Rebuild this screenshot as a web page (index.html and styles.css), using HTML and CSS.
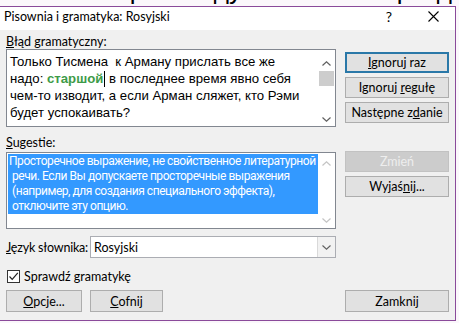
FILE: index.html
```html
<!DOCTYPE html>
<html lang="pl">
<head>
  <meta charset="UTF-8" />
  <meta name="viewport" content="width=device-width, initial-scale=1" />
  <title>Pisownia i gramatyka</title>
  <link rel="stylesheet" href="styles.css">
</head>
<body>
  <div class="doc-strip">
    <p class="doc-line">положен и расследуйтел. Что-то разд</p>
  </div>

  <div class="dialog">
    <div class="title-bar">
      <span class="title">Pisownia i gramatyka: Rosyjski</span>
      <span class="help">?</span>
      <svg class="close" width="11" height="11" viewBox="0 0 11 11">
        <path d="M0.5 0.5 L10.5 10.5 M10.5 0.5 L0.5 10.5" stroke="#000" stroke-width="1.1" fill="none" />
      </svg>
    </div>

    <div class="dialog-body">
      <div class="main-col">
        <div class="field-label"><u>B</u>łąd gramatyczny:</div>
        <div class="text-box error-box">
          <div class="box-text">Только Тисмена&nbsp; к Арману прислать все же<br>надо: <b class="flagged">старшой</b><span class="caret"></span> в последнее время явно себя<br>чем-то изводит, а если Арман сляжет, кто Рэми<br>будет успокаивать?</div>
          <div class="scrollbar error-scroll">
            <div class="arrow-cell">
              <svg width="9" height="5" viewBox="0 0 9 5"><polyline points="0.5,4.5 4.5,0.8 8.5,4.5" /></svg>
            </div>
            <div class="track"><div class="thumb"></div></div>
            <div class="arrow-cell">
              <svg width="9" height="5" viewBox="0 0 9 5"><polyline points="0.5,0.5 4.5,4.2 8.5,0.5" /></svg>
            </div>
          </div>
        </div>

        <div class="field-label suggest-label"><u>S</u>ugestie:</div>
        <div class="text-box suggest-box">
          <div class="suggest-area">
            <div class="selected">Просторечное выражение, не свойственное литературной<br>речи. Если Вы допускаете просторечные выражения<br>(например, для создания специального эффекта),<br>отключите эту опцию.</div>
          </div>
          <div class="scrollbar suggest-scroll">
            <div class="arrow-cell">
              <svg width="9" height="5" viewBox="0 0 9 5"><polyline points="0.5,4.5 4.5,0.8 8.5,4.5" /></svg>
            </div>
            <div class="arrow-cell">
              <svg width="9" height="5" viewBox="0 0 9 5"><polyline points="0.5,0.5 4.5,4.2 8.5,0.5" /></svg>
            </div>
          </div>
        </div>

        <div class="lang-row">
          <span class="lang-label"><u>J</u>ęzyk słownika:</span>
          <div class="combo">
            <span class="combo-value">Rosyjski</span>
            <span class="combo-drop">
              <svg width="9" height="5" viewBox="0 0 9 5"><polyline points="0.5,0.5 4.5,4.2 8.5,0.5" /></svg>
            </span>
          </div>
        </div>

        <label class="check-row">
          <span class="check-box">
            <svg width="11" height="11" viewBox="0 0 11 11"><polyline points="1.5,5.5 4.2,8.3 9.8,1.8" /></svg>
          </span>
          <span>Sprawdź <u>g</u>ramatykę</span>
        </label>

        <div class="bottom-row">
          <button class="btn btn-options"><u>O</u>pcje...</button>
          <button class="btn btn-undo"><u>C</u>ofnij</button>
        </div>
      </div>

      <div class="side-col">
        <button class="btn btn-default"><u>I</u>gnoruj raz</button>
        <button class="btn">Ignoruj <u>r</u>egułę</button>
        <button class="btn">Następne z<u>d</u>anie</button>
        <button class="btn btn-disabled btn-change">Zmień</button>
        <button class="btn">Wyjaś<u>n</u>ij...</button>
        <button class="btn btn-close">Zamknij</button>
      </div>
    </div>
  </div>
</body>
</html>
```

FILE: styles.css
```css
:root {
  --accent: #8a4a9a;
  --dialog-bg: #f0f0f0;
  --box-border: #828790;
  --btn-bg: #e1e1e1;
  --btn-border: #adadad;
  --select: #3399ff;
}

body {
  margin: 0;
  background: #fbf7fb;
  color: #000;
  font-family: Lato, Roboto, 'Noto Sans', sans-serif;
  font-size: 12.5px;
}

/* document text peeking above the dialog */
.doc-strip {
  height: 6px;
  overflow: hidden;
}

.doc-line {
  margin: -25px 0 0 -3px;
  font: 26px/30px 'Liberation Sans', sans-serif;
  white-space: nowrap;
}

.dialog {
  width: 456px;
  box-sizing: border-box;
  background: var(--dialog-bg);
  border-top: 1px solid var(--accent);
  border-right: 1px solid var(--accent);
  border-bottom: 1px solid var(--accent);
}

.title-bar {
  height: 23px;
  background: #fff;
  display: flex;
  align-items: flex-start;
  padding: 2px 16px 0 4px;
  box-sizing: border-box;
  line-height: 15px;
}

.help {
  margin-left: auto;
  margin-right: 36px;
  font-size: 14px;
  line-height: 15px;
}

.close {
  margin-top: 2px;
}

.dialog-body {
  display: flex;
  gap: 9px;
  padding: 4px 6px 8px 6px;
}

.main-col {
  width: 330px;
  display: flex;
  flex-direction: column;
}

.field-label {
  line-height: 15px;
}

.suggest-label {
  margin-top: 8px;
  margin-bottom: 2px;
}

.text-box {
  background: #fff;
  border: 1px solid var(--box-border);
  box-sizing: border-box;
  display: grid;
  grid-template-columns: minmax(0, 1fr) 17px;
  overflow: hidden;
}

.error-box {
  height: 78px;
}

.box-text {
  padding: 3px 0 0 3px;
  font: 13.2px/17px 'Liberation Sans', Arial, sans-serif;
  white-space: nowrap;
}

.flagged {
  color: #3d9b48;
}

.caret {
  display: inline-block;
  width: 1px;
  height: 16px;
  background: #000;
  vertical-align: -4px;
  margin-left: 1px;
}

.scrollbar {
  display: flex;
  flex-direction: column;
}

.arrow-cell {
  height: 12px;
  display: flex;
  align-items: center;
  justify-content: center;
}

.arrow-cell polyline {
  fill: none;
  stroke: #606060;
  stroke-width: 1.2;
}

.error-scroll {
  padding: 7px 0 1px;
}

.track {
  flex: 1;
  padding-top: 2px;
}

.thumb {
  margin: 0 1px;
  height: 15px;
  background: #cdcdcd;
}

.suggest-box {
  height: 77px;
}

.suggest-area {
  padding: 1px 0 0 1px;
}

.selected {
  background: var(--select);
  color: #fff;
  font-family: Roboto, 'Noto Sans', sans-serif;
  font-size: 12px;
  letter-spacing: -0.45px;
  line-height: 15px;
  padding-left: 4px;
  text-indent: -3px;
  white-space: nowrap;
}

.suggest-scroll {
  justify-content: space-between;
  padding: 4px 0 2px;
}

.suggest-scroll polyline {
  stroke: #c4c4c4;
}

.lang-row {
  margin-top: 7px;
  display: flex;
  align-items: center;
}

.lang-label {
  width: 84px;
  flex-shrink: 0;
  white-space: nowrap;
  letter-spacing: -0.2px;
}

.combo {
  flex: 1;
  height: 22px;
  box-sizing: border-box;
  background: #fff;
  border: 1px solid #abadb3;
  display: flex;
  align-items: center;
}

.combo-value {
  flex: 1;
  padding-left: 3px;
}

.combo-drop {
  width: 17px;
  align-self: stretch;
  display: flex;
  align-items: center;
  justify-content: center;
  background: #f2f2f2;
  border-left: 1px solid #d9d9d9;
}

.combo-drop polyline {
  fill: none;
  stroke: #606060;
  stroke-width: 1.1;
}

.check-row {
  margin-top: 11px;
  display: flex;
  align-items: center;
  gap: 4px;
  line-height: 15px;
  padding-left: 1px;
}

.check-box {
  width: 13px;
  height: 13px;
  box-sizing: border-box;
  border: 1px solid #333;
  background: #fff;
  display: flex;
  align-items: center;
  justify-content: center;
}

.check-box polyline {
  fill: none;
  stroke: #222;
  stroke-width: 1.2;
}

.bottom-row {
  margin-top: 6px;
  display: flex;
  gap: 8px;
}

.btn {
  height: 21px;
  padding: 0;
  background: var(--btn-bg);
  border: 1px solid var(--btn-border);
  font-family: inherit;
  font-size: 12.5px;
  color: #000;
  line-height: 15px;
}

.bottom-row .btn,
.btn-close {
  height: 22px;
}

.btn-options {
  width: 76px;
}

.btn-undo {
  width: 73px;
}

.side-col {
  width: 104px;
  display: flex;
  flex-direction: column;
  gap: 4px;
  padding-top: 18px;
}

.btn-default {
  border: 2px solid #2a78a8;
}

.btn-change {
  margin-top: 24px;
}

.btn-disabled {
  background: #cccccc;
  border-color: #c2c2c2;
  color: #eeeeee;
}

.btn-close {
  margin-top: auto;
}
```
